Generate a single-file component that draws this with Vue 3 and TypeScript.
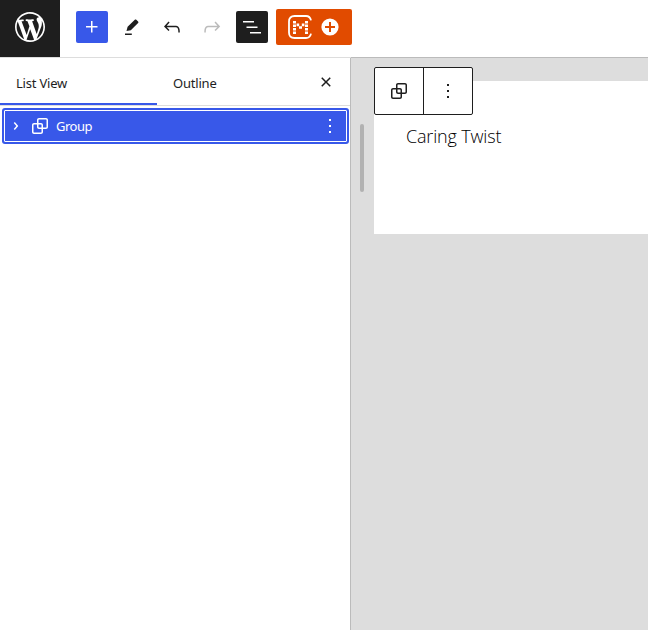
<script setup lang="ts">
const icons = {
  plus: 'M11 12.5V17.5H12.5V12.5H17.5V11H12.5V6H11V11H6V12.5H11Z',
  edit: 'M6.5 16l1.1-4.3 7.2-6.9c.5-.5 1-.5 1.5 0l1.8 1.8c.5.5.5 1 0 1.5l-7.3 7.1L6.5 16zM5 18.5h6.8V20H5z',
  undo: 'M18.3 11.7c-.6-.6-1.4-.9-2.3-.9H6.7l2.9-3.3-1.1-1-4.5 5L8.5 16l1-1-2.7-2.7H16c.5 0 .9.2 1.3.5 1 1 1 3.4 1 4.5v.3h1.5v-.2c0-1.5 0-4.3-1.5-5.7z',
  redo: 'M15.6 6.5l-1.1 1 2.9 3.3H8c-.9 0-1.7.3-2.3.9-1.4 1.5-1.4 4.2-1.4 5.6v.2h1.5v-.3c0-1.1 0-3.5 1-4.5.3-.3.7-.5 1.3-.5h9.2L14.5 15l1.1 1.1 4.6-4.6-4.6-5z',
  list: 'M3 6h11v1.5H3V6Zm3.5 5.5h11V13h-11v-1.5ZM21 17H10v1.5h11V17Z',
  close: 'M12 13.06l3.712 3.713 1.061-1.06L13.061 12l3.712-3.712-1.06-1.06L12 10.938 8.288 7.227l-1.061 1.06L10.939 12l-3.712 3.712 1.06 1.061L12 13.061z',
  chevron: 'M10.8622 8.04053L14.2805 12.0286L10.8622 16.0167L9.72327 15.0405L12.3049 12.0286L9.72327 9.01672L10.8622 8.04053Z',
  group: 'M18 4h-7c-1.1 0-2 .9-2 2v3H6c-1.1 0-2 .9-2 2v7c0 1.1.9 2 2 2h7c1.1 0 2-.9 2-2v-3h3c1.1 0 2-.9 2-2V6c0-1.1-.9-2-2-2zm-4.5 14c0 .3-.2.5-.5.5H6c-.3 0-.5-.2-.5-.5v-7c0-.3.2-.5.5-.5h3V13c0 1.1.9 2 2 2h2.5v3zm0-4.5H11c-.3 0-.5-.2-.5-.5v-2.5H13c.3 0 .5.2.5.5v2.5zm5-.5c0 .3-.2.5-.5.5h-3V11c0-1.1-.9-2-2-2h-2.5V6c0-.3.2-.5.5-.5h7c.3 0 .5.2.5.5v7z',
  more: 'M13 19h-2v-2h2v2zm0-6h-2v-2h2v2zm0-6h-2V5h2v2z',
}
const tools: { name: keyof typeof icons; kind: string }[] = [
  { name: 'plus', kind: 'primary' },
  { name: 'edit', kind: 'plain' },
  { name: 'undo', kind: 'plain' },
  { name: 'redo', kind: 'disabled' },
  { name: 'list', kind: 'pressed' },
]
</script>

<template>
  <div class="editor">
    <header class="header">
      <a class="logo">
        <svg width="36" height="36" viewBox="-2 -2 24 24"><path d="M20 10c0-5.51-4.49-10-10-10C4.48 0 0 4.49 0 10c0 5.52 4.48 10 10 10 5.51 0 10-4.48 10-10zM7.78 15.37L4.37 6.22c.55-.02 1.17-.08 1.17-.08.5-.06.44-1.13-.06-1.11 0 0-1.45.11-2.37.11-.18 0-.37 0-.58-.01C4.12 2.69 6.87 1.11 10 1.11c2.33 0 4.45.87 6.05 2.34-.68-.11-1.65.39-1.65 1.58 0 .74.45 1.36.9 2.1.35.61.55 1.36.55 2.46 0 1.49-1.4 5-1.4 5l-3.03-8.37c.54-.02.82-.17.82-.17.5-.05.44-1.25-.06-1.22 0 0-1.44.12-2.38.12-.87 0-2.33-.12-2.33-.12-.5-.03-.56 1.2-.06 1.22l.92.08 1.26 3.41zM17.41 10c.24-.64.74-1.87.43-4.25.7 1.29 1.05 2.71 1.05 4.25 0 3.29-1.73 6.24-4.4 7.78.97-2.59 1.94-5.2 2.92-7.78zM6.1 18.09C3.12 16.65 1.11 13.53 1.11 10c0-1.3.23-2.48.72-3.59C3.25 10.3 4.67 14.2 6.1 18.09zm4.03-6.63l2.58 6.98c-.86.29-1.76.45-2.71.45-.79 0-1.57-.11-2.29-.33.81-2.38 1.62-4.74 2.42-7.1z" /></svg>
      </a>
      <div class="tools">
        <button v-for="t in tools" :key="t.name" class="tool" :class="t.kind">
          <svg class="icon" viewBox="0 0 24 24"><path :d="icons[t.name]" /></svg>
        </button>
        <button class="library">
          <svg width="24" height="24" viewBox="0 0 24 24">
            <path class="frame" d="M23 5.4C22.4 2.600 20.600 1 18 1H6.500C3 1 1 3 1 6.500v11C1 21 3 23 6.500 23H18c2.600 0 4.400-1.600 5-4.400" />
            <path d="M5 6h3v2.600H5zM5 9.400h3V12H5zM5 13h3v2.600H5zM5 16.400h3V19H5zM17 6h3v2.600h-3zM17 9.400h3V12h-3zM17 13h3v2.600h-3zM17 16.400h3V19h-3zM8.600 8.500h2.600v2.700H8.600zM13.800 8.500h2.600v2.700h-2.600zM11 11.200h3v2.600h-3z" />
          </svg>
          <svg width="18" height="18" viewBox="0 0 18 18">
            <circle cx="9" cy="9" r="8.6" />
            <path class="cross" d="M9 4v10M4 9h10" />
          </svg>
        </button>
      </div>
    </header>
    <div class="body">
      <aside class="sidebar">
        <div class="tabs">
          <button class="tab active"><span class="t1">List View</span></button>
          <button class="tab"><span class="t2">Outline</span></button>
          <button class="close"><svg class="icon" viewBox="0 0 24 24"><path :d="icons.close" /></svg></button>
        </div>
        <div class="row">
          <svg class="icon" viewBox="0 0 24 24"><path :d="icons.chevron" /></svg>
          <svg class="icon" viewBox="0 0 24 24"><path :d="icons.group" /></svg>
          <span class="name">Group</span>
          <svg class="icon" viewBox="0 0 24 24"><path :d="icons.more" /></svg>
        </div>
      </aside>
      <main class="canvas">
        <div class="handle"></div>
        <section class="page">
          <p class="text">Caring Twist</p>
          <div class="toolbar">
            <button class="cell"><svg class="icon" viewBox="0 0 24 24"><path :d="icons.group" /></svg></button>
            <button class="cell"><svg class="icon" viewBox="0 0 24 24"><path :d="icons.more" /></svg></button>
          </div>
        </section>
      </main>
    </div>
  </div>
</template>

<style>
body { margin: 0; overflow: hidden; }
</style>

<style scoped>
* { box-sizing: border-box; }
.editor { width: 648px; height: 630px; display: flex; flex-direction: column; background: #fff; color: #1e1e1e; font: 13px/20px "Noto Sans", sans-serif; overflow: hidden; }
button { border: 0; padding: 0; margin: 0; background: none; font: inherit; color: inherit; display: flex; align-items: center; justify-content: center; }
svg { display: block; fill: currentColor; flex: none; }
.icon { width: 24px; height: 24px; }
.header { display: flex; height: 57px; flex: none; }
.logo { width: 60px; height: 57px; background: #1e1e1e; color: #fff; display: flex; align-items: center; justify-content: center; padding-bottom: 3px; }
.tools { display: flex; align-items: center; gap: 8px; padding: 0 16px 3px; }
.tool { width: 32px; height: 32px; border-radius: 2px; }
.primary { background: #3858e9; color: #fff; }
.pressed { background: #1e1e1e; color: #fff; }
.disabled { color: #bbb; }
.library { width: 76px; height: 36px; background: #e14b00; color: #fff; border-radius: 2px; gap: 9px; padding-right: 1px; }
.frame { fill: none; stroke: currentColor; stroke-width: 1.8; }
.cross { stroke: #e14b00; stroke-width: 2; }
.body { display: flex; flex: 1; border-top: 1px solid #ddd; }
.sidebar { width: 351px; flex: none; border-right: 1px solid #bbb; }
.tabs { display: flex; height: 48px; border-bottom: 1px solid #ddd; }
.tab { height: 47px; padding: 3px 16px 0; width: 76px; justify-content: flex-start; white-space: nowrap; }
.tab.active { width: 157px; border-bottom: 2px solid #3858e9; padding-top: 5px; }
.t1 { letter-spacing: -0.2px; }
.t2 { letter-spacing: -0.2px; }
.close { margin-left: auto; margin-right: 12px; }
.row { display: flex; align-items: center; height: 36px; margin: 2px 1px 0 2px; padding: 0 7px 0 2px; background: #3858e9; color: #fff; border-radius: 3px; outline: 1px solid #fff; outline-offset: -3px; }
.name { flex: 1; padding-left: 4px; letter-spacing: -0.5px; }
.canvas { flex: 1; display: flex; background: #ddd; margin-top: -1px; border-top: 1px solid #bbb; padding: 23px 0 0 9px; }
.handle { width: 4px; height: 68px; margin-top: 43px; border-radius: 2px; background: #b1b1b1; flex: none; }
.page { position: relative; flex: 1; margin-left: 10px; height: 153px; background: #fff; padding: 41px 32px; }
.text { margin: 0; font: 350 18px/28px "Open Sans", "Noto Sans", sans-serif; letter-spacing: -0.17px; color: #000; white-space: nowrap; }
.toolbar { position: absolute; left: 0; top: -14px; display: flex; width: 99px; height: 48px; background: #fff; border: 1px solid #1e1e1e; border-radius: 2px; }
.cell { flex: 1; }
.cell + .cell { border-left: 1px solid #1e1e1e; }
</style>
